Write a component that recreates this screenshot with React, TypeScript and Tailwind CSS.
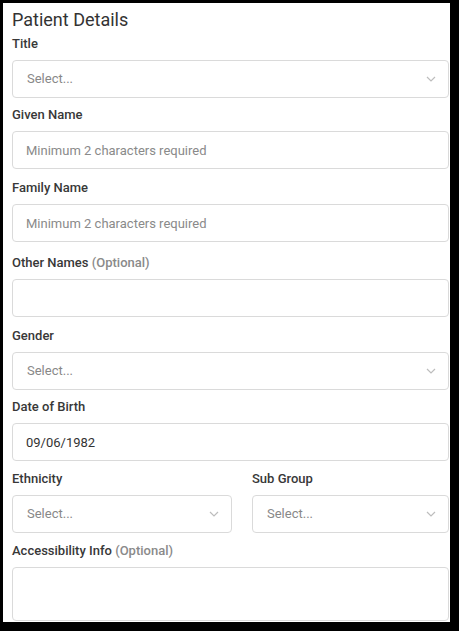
import React from "react";

function Chevron() {
  return (
    <svg width="10" height="6" viewBox="0 0 10 6" fill="none">
      <path d="M1 1l4 4 4-4" stroke="#bdbdbd" strokeWidth="1.2" />
    </svg>
  );
}

function Label({ text, optional }: { text: string; optional?: boolean }) {
  return (
    <p className="h-[17px] pt-[1px] leading-4 text-[13px] font-medium text-[#383838] mb-[8px]">
      {text}
      {optional && <span className="text-[#8a8a8a]"> (Optional)</span>}
    </p>
  );
}

function SelectBox() {
  return (
    <div className="h-[38px] border border-[#dadada] rounded flex items-center justify-between pl-[14px] pr-[12px]">
      <span className="text-[13px] text-[#888]">Select...</span>
      <Chevron />
    </div>
  );
}

function TextBox({ placeholder, value }: { placeholder?: string; value?: string }) {
  return (
    <input
      readOnly
      value={value}
      placeholder={placeholder}
      className="w-full h-[38px] border border-[#dadada] rounded px-[13px] text-[13px] text-[#333] placeholder:text-[#8a8a8a] outline-none"
    />
  );
}

function App() {
  return (
    <div className="w-[459px] h-[631px] bg-black pt-[3px] pl-[3px] font-[family-name:Roboto,sans-serif]">
      <div className="w-[447px] h-[619px] bg-white overflow-hidden pl-[9px] pr-[1px] pt-[6px]">
        <h1 className="text-[18px] leading-[22px] text-[#333]">Patient Details</h1>

        <div className="mt-[4px]">
          <Label text="Title" />
          <SelectBox />
        </div>

        <div className="mt-[8px]">
          <Label text="Given Name" />
          <TextBox placeholder="Minimum 2 characters required" />
        </div>

        <div className="mt-[10px]">
          <Label text="Family Name" />
          <TextBox placeholder="Minimum 2 characters required" />
        </div>

        <div className="mt-[12px]">
          <Label text="Other Names" optional />
          <TextBox />
        </div>

        <div className="mt-[10px]">
          <Label text="Gender" />
          <SelectBox />
        </div>

        <div className="mt-[8px]">
          <Label text="Date of Birth" />
          <TextBox value="09/06/1982" />
        </div>

        <div className="mt-[9px] flex gap-5">
          <div className="w-[220px]">
            <Label text="Ethnicity" />
            <SelectBox />
          </div>
          <div className="flex-1">
            <Label text="Sub Group" />
            <SelectBox />
          </div>
        </div>

        <div className="mt-[9px]">
          <Label text="Accessibility Info" optional />
          <div className="h-[54px] border border-[#dadada] rounded" />
        </div>
      </div>
    </div>
  );
}

export default App;
